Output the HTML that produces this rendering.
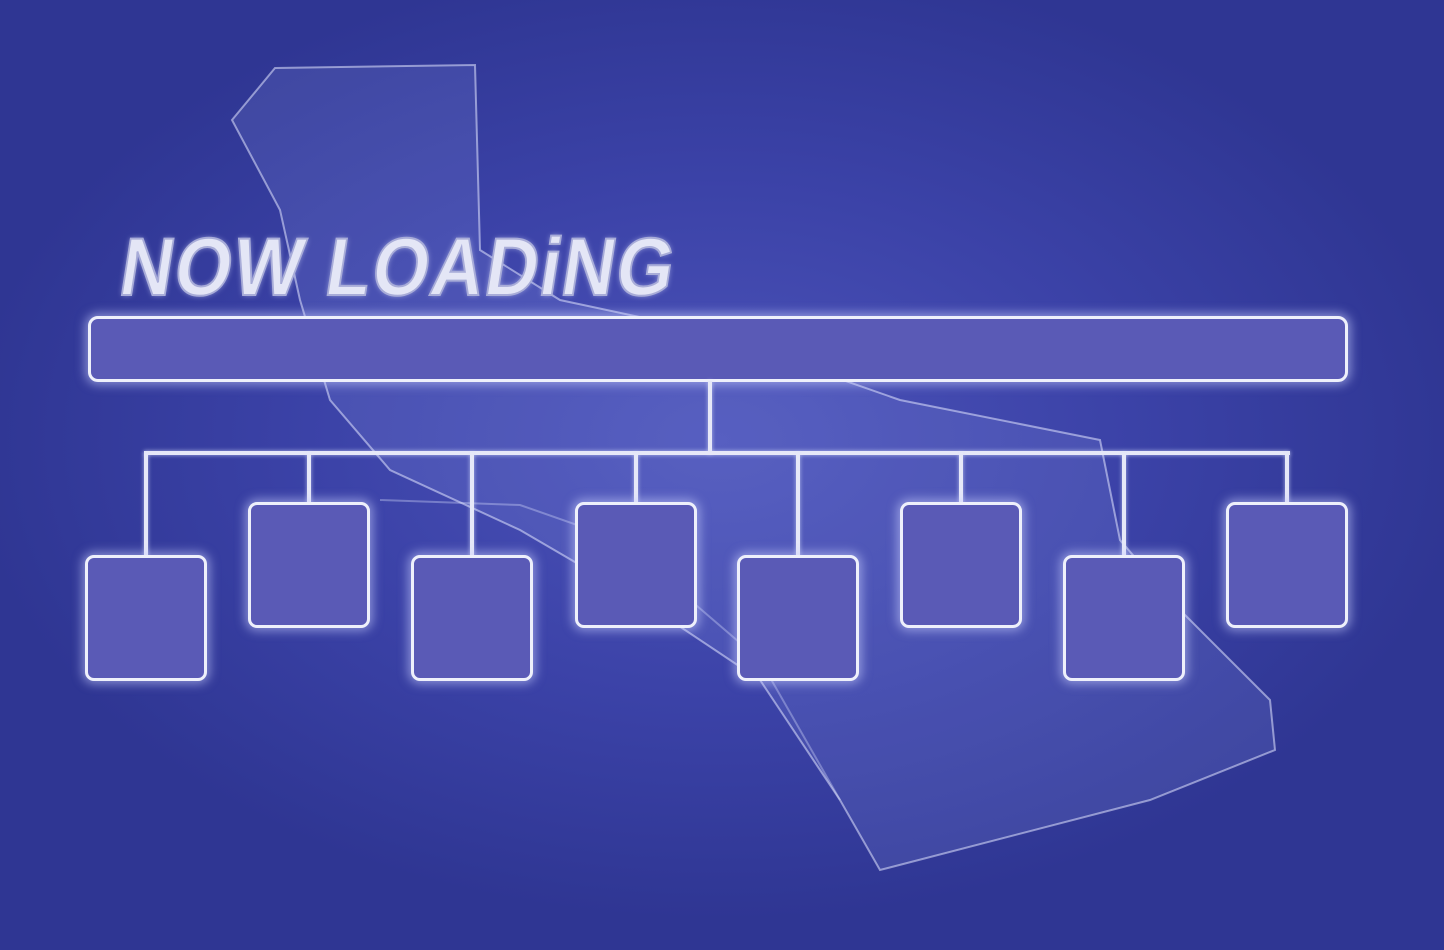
<!DOCTYPE html>
<html><head><style>
html,body{margin:0;padding:0}
body{width:1444px;height:950px;overflow:hidden;position:relative;
background:radial-gradient(ellipse 750px 480px at 720px 440px,#4c53b9 0%,#3b42a7 55%,#2f3693 100%);font-family:"Liberation Sans",sans-serif}
.b{position:absolute;background:#5a5ab6;border:3px solid #eef0fb;border-radius:9px;box-sizing:border-box;box-shadow:0 0 10px 3px rgba(200,205,255,.55)}
.l{position:absolute;background:#e6e8f8;box-shadow:0 0 4px rgba(220,225,255,.7)}
.t{position:absolute;left:114px;top:222px;font-size:82px;font-weight:bold;color:#e4e6f6;letter-spacing:2px;transform:scaleX(.89) skewX(-10deg);transform-origin:left bottom;-webkit-text-stroke:2px #a8acd8;text-shadow:0 0 6px rgba(220,225,255,.6);white-space:nowrap;line-height:92px}
</style></head><body>
<svg width="1444" height="950" style="position:absolute;left:0;top:0">
<path d="M275 68 L475 65 L480 250 L560 300 L700 330 L900 400 L1100 440 L1120 540 L1180 610 L1270 700 L1275 750 L1150 800 L880 870 L840 800 L760 680 L640 600 L520 530 L390 470 L330 400 L300 300 L280 210 L232 120 Z" fill="rgba(150,160,235,.16)" stroke="rgba(225,230,255,.55)" stroke-width="2"/>
<path d="M380 500 L520 505 L620 540 L760 660 L840 800" fill="none" stroke="rgba(220,225,255,.35)" stroke-width="2"/>
</svg>
<div class="t">NOW LOADiNG</div>
<div class="b" style="left:88px;top:316px;width:1260px;height:66px;border-radius:10px"></div>
<div class="l" style="left:708px;top:381px;width:4px;height:73px"></div>
<div class="l" style="left:144px;top:451px;width:1146px;height:4px"></div>
<div class="l" style="left:144px;top:453px;width:4px;height:104px"></div>
<div class="l" style="left:307px;top:453px;width:4px;height:51px"></div>
<div class="l" style="left:470px;top:453px;width:4px;height:104px"></div>
<div class="l" style="left:634px;top:453px;width:4px;height:51px"></div>
<div class="l" style="left:796px;top:453px;width:4px;height:104px"></div>
<div class="l" style="left:959px;top:453px;width:4px;height:51px"></div>
<div class="l" style="left:1122px;top:453px;width:4px;height:104px"></div>
<div class="l" style="left:1285px;top:453px;width:4px;height:51px"></div>
<div class="b" style="left:85px;top:555px;width:122px;height:126px"></div>
<div class="b" style="left:411px;top:555px;width:122px;height:126px"></div>
<div class="b" style="left:737px;top:555px;width:122px;height:126px"></div>
<div class="b" style="left:1063px;top:555px;width:122px;height:126px"></div>
<div class="b" style="left:248px;top:502px;width:122px;height:126px"></div>
<div class="b" style="left:575px;top:502px;width:122px;height:126px"></div>
<div class="b" style="left:900px;top:502px;width:122px;height:126px"></div>
<div class="b" style="left:1226px;top:502px;width:122px;height:126px"></div>
</body></html>
